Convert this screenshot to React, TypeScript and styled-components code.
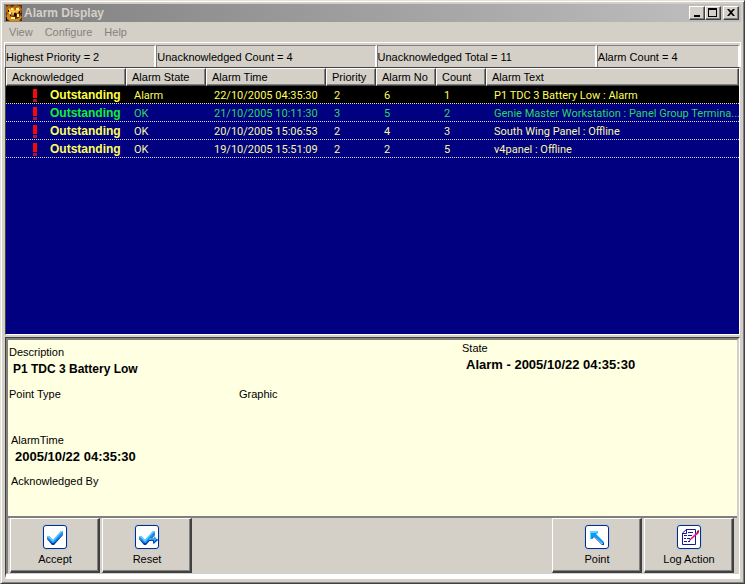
import React from 'react';
import styled, { createGlobalStyle, css } from 'styled-components';

const GlobalStyle = createGlobalStyle`
  *, *::before, *::after { box-sizing: border-box; }
  body {
    margin: 0;
    background: #d4d0c8;
    color: #000;
    font: 11px/13px "Liberation Sans", Arial, sans-serif;
  }
  button { font: inherit; color: inherit; margin: 0; }
`;

const raised = css`
  background: #d4d0c8;
  border: 1px solid;
  border-color: #fff #404040 #404040 #fff;
  box-shadow: inset -1px -1px #808080;
`;

const Window = styled.main`
  display: flex;
  flex-direction: column;
  min-height: 100vh;
  padding: 3px 3px 4px;
  ${raised}
  border-color: #e4e0d8 #404040 #404040 #e4e0d8;
  box-shadow: inset 1px 1px #fff, inset -1px -1px #808080;
`;

const TitleBar = styled.header`
  display: flex;
  align-items: center;
  gap: 2px;
  height: 18px;
  padding: 0 2px;
  background: linear-gradient(90deg, #808080, #c0c0c0);
`;

const Title = styled.h1`
  flex: 1;
  margin: 0;
  color: #d4d0c8;
  font-size: 12px;
  line-height: 18px;
`;

const Controls = styled.div`
  display: flex;
`;

const ControlButton = styled.button<{ $apart?: boolean }>`
  display: grid;
  place-items: center;
  width: 16px;
  height: 14px;
  padding: 0;
  margin-left: ${(p) => (p.$apart ? 2 : 0)}px;
  ${raised}
`;

const MenuBar = styled.nav`
  display: flex;
  gap: 12px;
  height: 20px;
  padding: 0 5px;
`;

const MenuItem = styled.button`
  padding: 0;
  border: 0;
  background: none;
  color: #84827c;
`;

const StatusBar = styled.section`
  display: grid;
  grid-template-columns: 151fr 220fr 220fr 143fr;
  padding-top: 2px;
  border-top: 1px solid #fff;
  border-right: 1px solid #fff;
  border-left: 1px solid #fff;
`;

const StatusCell = styled.div`
  height: 22px;
  padding-top: 5px;
  border: 1px solid;
  border-width: 1px 2px 0 1px;
  border-color: #808080 #fff #fff #808080;
  white-space: nowrap;
`;

const ListPane = styled.section`
  flex: 1;
  min-height: 160px;
  margin: 0 1px;
  border: 1px solid;
  border-color: #404040 #fff #fff #404040;
  background: #000080;
`;

const AlarmTable = styled.table`
  width: 100%;
  table-layout: fixed;
  border-collapse: separate;
  border-spacing: 0;
`;

const Col = styled.col<{ $width?: number }>`
  width: ${(p) => (p.$width ? `${p.$width}px` : 'auto')};
`;

const HeaderCell = styled.th`
  height: 18px;
  padding: 1px 0 0 5px;
  ${raised}
  font-weight: normal;
  text-align: left;
  white-space: nowrap;
`;

const Row = styled.tr<{ $selected?: boolean; $color: string }>`
  color: ${(p) => p.$color};
  background: linear-gradient(90deg, #d8d8f0 50%, transparent 50%) left bottom / 2px 1px repeat-x
    ${(p) => (p.$selected ? '#000' : '#000080')};
`;

const Cell = styled.td`
  height: 18px;
  padding: 0 0 0 8px;
  font-family: Roboto, "Liberation Sans", sans-serif;
  white-space: nowrap;
`;

const Ack = styled.span<{ $color: string }>`
  display: flex;
  align-items: center;
  gap: 12px;
  padding-left: 19px;
  color: ${(p) => p.$color};
  font-family: "Liberation Sans", Arial, sans-serif;
  font-size: 12px;
  font-weight: bold;
`;

const Lower = styled.section`
  margin: 2px 1px 0;
  border: 1px solid;
  border-color: #404040 #fff #fff #404040;
  border-bottom-width: 5px;
`;

const Inner = styled.div`
  border: 2px solid;
  border-color: #808080 #d4d0c8 #d4d0c8 #808080;
  border-bottom-width: 1px;
`;

const Details = styled.dl`
  display: grid;
  grid-template-columns: 230fr 223fr 275fr;
  grid-template-rows: 42px 46px 41px 47px;
  margin: 0;
  padding-left: 1px;
  background: #ffffe1;
`;

const Field = styled.div<{ $span?: number; $raised?: boolean; $indent?: boolean }>`
  grid-column: span ${(p) => p.$span ?? 1};
  padding-top: ${(p) => (p.$raised ? 2 : 6)}px;
  padding-left: ${(p) => (p.$indent ? 2 : 0)}px;
`;

const Label = styled.dt``;

const Value = styled.dd<{ $large?: boolean }>`
  margin: 3px 0 0 4px;
  font-weight: bold;
  font-size: ${(p) => (p.$large ? 13 : 12)}px;
  line-height: 14px;
`;

const ActionBar = styled.footer`
  display: flex;
  gap: 2px;
  padding: 0 3px 0 2px;
  border-top: 2px solid #808080;
`;

const Spacer = styled.div`
  flex: 1;
`;

const ActionButton = styled.button`
  display: flex;
  flex-direction: column;
  align-items: center;
  gap: 3px;
  width: 90px;
  height: 55px;
  padding: 5px 0 0 1px;
  ${raised}
  border-width: 1px 2px 2px 1px;
`;

const AppIcon = () => (
  <svg width="16" height="16" viewBox="0 0 16 16" aria-hidden="true">
    <rect width="16" height="16" fill="#5c2c04" />
    <path d="M0 2l3-2 3 2 3-2 5 1 2 3-1 4-2-1-2 4-3-3-2 4-4-2-2-3z" fill="#b86408" />
    <path d="M1 9l3 1 1 3 4 1 4-1 1-3 2 2-3 4H4l-4-3z" fill="#d88c14" />
    <path d="M3 3l3 2 1-3 2 4 3-4 2 3-3 3-2-1-2 4-1-4-3 3-1-4z" fill="#f4c448" />
    <path d="M5 3h2v2H5zM10 3h3v2h-3zM3 7h2v2H3zM11 9h2v3h-2zM5 12h4v2H5z" fill="#fff0a0" />
    <path d="M8 8h2l1 2-2 2-1-2zM2 5h1v2H2zM13 6h1v2h-1zM4 10h1v1H4zM0 12h1v4H0z" fill="#1c0800" />
  </svg>
);

const AlertIcon = () => (
  <svg width="5" height="13" viewBox="0 0 5 13" aria-hidden="true">
    <path d="M0 0h4v9H0z" fill="#f80808" />
    <path d="M0 10h4v3H0z" fill="#a81830" />
  </svg>
);

const Tile = ({ children }: { children: React.ReactNode }) => (
  <svg width="26" height="26" viewBox="0 0 26 26" aria-hidden="true">
    <rect width="26" height="26" rx="4" fill="#b4cce8" />
    <rect x="1.5" y="1.5" width="23" height="23" rx="2.5" fill="#fff" stroke="#102c70" />
    {children}
  </svg>
);

const Tick = () => (
  <>
    <path d="M5 12h2l4 4 8-9h2v3L12 20h-2l-5-6z" fill="#1090f8" />
    <path d="M5 12h2l4 4 8-9h2v1l-2 1-8 9-4-4-2-1z" fill="#60d0ff" />
    <path d="M5 14l5 5h2l9-9v1l-9 10h-2l-5-6z" fill="#083898" />
  </>
);

const AcceptIcon = () => (
  <Tile>
    <Tick />
  </Tile>
);

const ResetIcon = () => (
  <Tile>
    <Tick />
    <path d="M15 14h5v-2l4 4-4 4v-3h-5z" fill="#30a4f8" />
    <path d="M15 16h5v2l3-3 1 1-5 4v-3h-4z" fill="#0844a8" />
  </Tile>
);

const PointIcon = () => (
  <Tile>
    <path d="M6 7h8v2l-2 1 8 8-1 2-9-8-2 3H6z" fill="#089cf4" />
    <path d="M6 7h8v1l-2 1H7v6H6z" fill="#58d8ff" />
    <path d="M8 15l2-2 8 8h2v-3l-1 1v1h-1l-8-8-2 2z" fill="#0848a8" />
  </Tile>
);

const LogIcon = () => (
  <Tile>
    <path d="M10.500 5.500h9v15h-13V9z M6 9.500h4.500V5" fill="#fff" stroke="#181898" />
    <path d="M12 8.500h5M8 11.500h3M12 11.500h4M8 14.500h2M11 14.500h3M8 17.500h3M12 17.500h2" stroke="#181898" />
    <path d="M14 15l7-7 2 1-7 6-3 2z" fill="#d81890" />
    <path d="M21 7l2-1v2l-2 2z" fill="#881828" />
    <path d="M13 17l1-2 1 1z" fill="#600840" />
  </Tile>
);

const columns = [
  { name: 'Acknowledged', width: 120 },
  { name: 'Alarm State', width: 80 },
  { name: 'Alarm Time', width: 120 },
  { name: 'Priority', width: 50 },
  { name: 'Alarm No', width: 60 },
  { name: 'Count', width: 50 },
  { name: 'Alarm Text' },
];

const alarms = [
  { ack: '#ffff40', color: '#ffff58', cells: ['Alarm', '22/10/2005 04:35:30', '2', '6', '1', 'P1 TDC 3 Battery Low : Alarm'] },
  { ack: '#10f030', color: '#28d860', cells: ['OK', '21/10/2005 10:11:30', '3', '5', '2', 'Genie Master Workstation : Panel Group Termina...'] },
  { ack: '#ffff58', color: '#f8f8a0', cells: ['OK', '20/10/2005 15:06:53', '2', '4', '3', 'South Wing Panel : Offline'] },
  { ack: '#ffff58', color: '#f8f8a0', cells: ['OK', '19/10/2005 15:51:09', '2', '2', '5', 'v4panel : Offline'] },
];

const statuses = [
  'Highest Priority = 2',
  'Unacknowledged Count = 4',
  'Unacknowledged Total = 11',
  'Alarm Count = 4',
];

export default function App() {
  return (
    <>
      <GlobalStyle />
      <Window>
        <TitleBar>
          <AppIcon />
          <Title>Alarm Display</Title>
          <Controls>
            <ControlButton aria-label="Minimize">
              <svg width="12" height="10" viewBox="0 0 12 10"><path d="M3 7h6v2H3z" /></svg>
            </ControlButton>
            <ControlButton aria-label="Maximize">
              <svg width="12" height="10" viewBox="0 0 12 10">
                <path d="M1 0h9v9H1zM2 2v6h7V2z" fillRule="evenodd" />
              </svg>
            </ControlButton>
            <ControlButton aria-label="Close" $apart>
              <svg width="12" height="10" viewBox="0 0 12 10">
                <path d="M2 1h2l2 2 2-2h2L7 4.500 10 8H8L6 6 4 8H2l3-3.500z" />
              </svg>
            </ControlButton>
          </Controls>
        </TitleBar>

        <MenuBar>
          {['View', 'Configure', 'Help'].map((m) => (
            <MenuItem key={m}>{m}</MenuItem>
          ))}
        </MenuBar>

        <StatusBar>
          {statuses.map((s) => (
            <StatusCell key={s}>{s}</StatusCell>
          ))}
        </StatusBar>

        <ListPane>
          <AlarmTable>
            <colgroup>
              {columns.map((c) => (
                <Col key={c.name} $width={c.width} />
              ))}
            </colgroup>
            <thead>
              <tr>
                {columns.map((c) => (
                  <HeaderCell key={c.name} scope="col">{c.name}</HeaderCell>
                ))}
              </tr>
            </thead>
            <tbody>
              {alarms.map((a, i) => (
                <Row key={a.cells[1]} $selected={i === 0} $color={a.color}>
                  <Cell>
                    <Ack $color={a.ack}>
                      <AlertIcon />
                      Outstanding
                    </Ack>
                  </Cell>
                  {a.cells.map((c, j) => (
                    <Cell key={j}>{c}</Cell>
                  ))}
                </Row>
              ))}
            </tbody>
          </AlarmTable>
        </ListPane>

        <Lower>
          <Inner>
            <Details>
              <Field $span={2}>
                <Label>Description</Label>
                <Value>P1 TDC 3 Battery Low</Value>
              </Field>
              <Field $raised>
                <Label>State</Label>
                <Value $large>Alarm - 2005/10/22 04:35:30</Value>
              </Field>
              <Field>
                <Label>Point Type</Label>
              </Field>
              <Field $span={2}>
                <Label>Graphic</Label>
              </Field>
              <Field $span={3} $indent>
                <Label>AlarmTime</Label>
                <Value $large>2005/10/22 04:35:30</Value>
              </Field>
              <Field $span={3} $indent>
                <Label>Acknowledged By</Label>
              </Field>
            </Details>
            <ActionBar>
              <ActionButton><AcceptIcon />Accept</ActionButton>
              <ActionButton><ResetIcon />Reset</ActionButton>
              <Spacer />
              <ActionButton><PointIcon />Point</ActionButton>
              <ActionButton><LogIcon />Log Action</ActionButton>
            </ActionBar>
          </Inner>
        </Lower>
      </Window>
    </>
  );
}
